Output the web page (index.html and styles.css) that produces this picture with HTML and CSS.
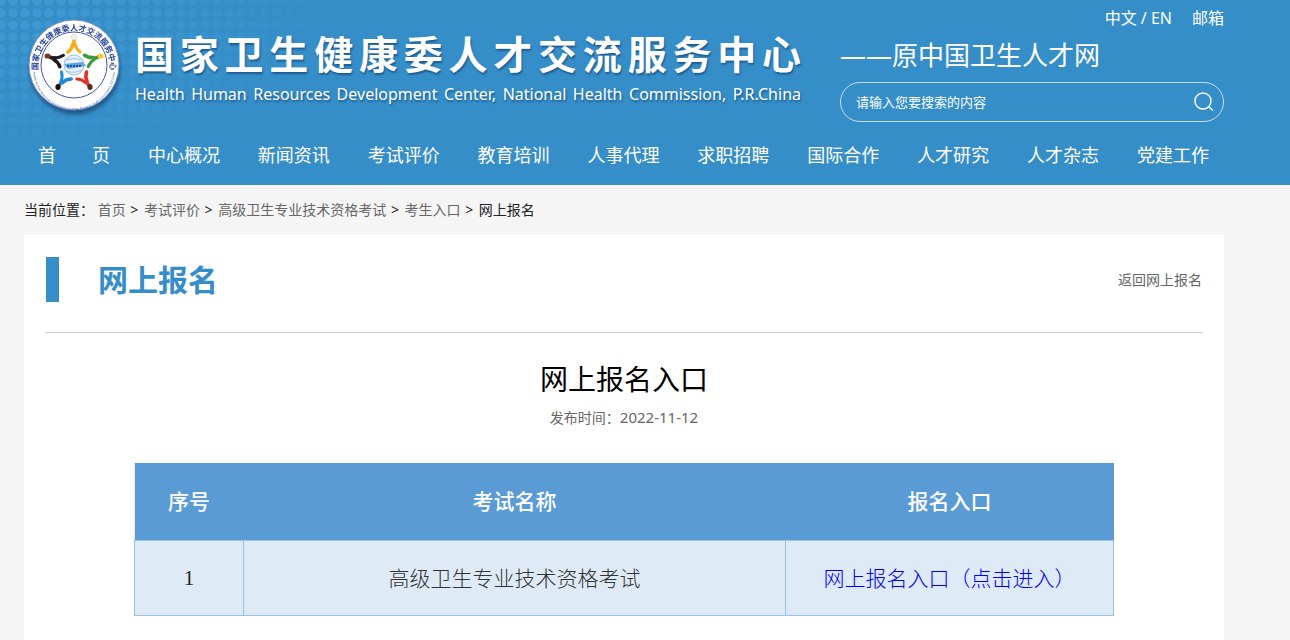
FILE: index.html
```html
<!DOCTYPE html>
<html lang="zh-CN">
<head>
<meta charset="utf-8">
<title>网上报名</title>
<link rel="stylesheet" href="styles.css">
</head>
<body>
<header class="site-header">
  <div class="wrap masthead">
    <a class="logo" href="#" aria-label="首页">
      <svg viewBox="0 0 92 92" width="92" height="92">
        <defs>
          <path id="arc-top" d="M11 56A36 36 0 1 1 81 56"/>
          <path id="arc-bottom" d="M5 50A41 41 0 0 0 87 50"/>
          <g id="figure" fill="none" stroke-linecap="round">
            <path stroke-width="3.600" d="M46 21V25M45 25Q44 30 40 33"/>
            <path stroke-width="3" d="M47 25Q48 30 52 33"/>
          </g>
        </defs>
        <circle cx="46" cy="46" r="45" fill="#fff" stroke="#7d8dc6"/>
        <circle cx="46" cy="46" r="33" fill="#fff" stroke="#4256a5" stroke-width="1"/>
        <text class="ring-cn"><textPath href="#arc-top" startOffset="50%" text-anchor="middle">国家卫生健康委人才交流服务中心</textPath></text>
        <text class="ring-en"><textPath href="#arc-bottom" startOffset="50%" text-anchor="middle">Health Human Resources Development Center, National Health Commission, P.R.China</textPath></text>
        <g stroke="#f6ac19"><use href="#figure"/></g>
        <g stroke="#3d9b3b" transform="rotate(72 46 46)"><use href="#figure"/></g>
        <g stroke="#e4312b" transform="rotate(144 46 46)"><use href="#figure"/></g>
        <g stroke="#2488d8" transform="rotate(216 46 46)"><use href="#figure"/></g>
        <g stroke="#1c1b20" transform="rotate(288 46 46)"><use href="#figure"/></g>
        <ellipse cx="46" cy="18" rx="2.600" ry="3" fill="#f4f1ee" stroke="#d5d0cc" stroke-width=".5"/>
        <ellipse cx="72.500" cy="37" rx="3" ry="2.600" fill="#fbc52b"/>
        <ellipse cx="62" cy="68" rx="2.600" ry="3" fill="#5b2a1c"/>
        <ellipse cx="30" cy="68" rx="2.600" ry="3" fill="#18120f"/>
        <ellipse cx="19.500" cy="37" rx="3" ry="2.600" fill="#7b3a20"/>
        <circle cx="46" cy="46" r="10" fill="#e8f1f9" stroke="#9ebfe0"/>
        <path d="M38 41Q46 38 54 41M38 52Q46 55 54 51" fill="none" stroke="#9cc3e6"/>
        <path d="M36 45L55 43L58 47L40 50Z" fill="#5ea8de"/>
        <path d="M39 47H53" stroke="#1d4f91" stroke-width="2" stroke-dasharray="2 1"/>
      </svg>
    </a>
    <div class="brand">
      <h1 class="brand-cn">国家卫生健康委人才交流服务中心</h1>
      <p class="brand-en">Health Human Resources Development Center, National Health Commission, P.R.China</p>
    </div>
    <div class="tools">
      <div class="quick"><span><a href="#">中文</a> / <a href="#">EN</a></span><a href="#">邮箱</a></div>
      <p class="former">——原中国卫生人才网</p>
      <form class="search">
        <input class="search-input" type="text" aria-label="搜索" placeholder="请输入您要搜索的内容">
        <button class="search-button" type="button" aria-label="搜索">
          <svg viewBox="0 0 20 20" width="20" height="20" fill="none" stroke="#fff" stroke-width="1.400"><circle cx="9" cy="9" r="8"/><path d="M14.500 14.500L19 18.500"/></svg>
        </button>
      </form>
    </div>
  </div>
  <nav class="wrap nav">
    <a href="#">首　　页</a><a href="#">中心概况</a><a href="#">新闻资讯</a><a href="#">考试评价</a><a href="#">教育培训</a><a href="#">人事代理</a><a href="#">求职招聘</a><a href="#">国际合作</a><a href="#">人才研究</a><a href="#">人才杂志</a><a href="#">党建工作</a>
  </nav>
</header>
<main class="wrap">
  <div class="crumbs"><span>当前位置：</span> <a href="#">首页</a> <span class="sep">&gt;</span> <a href="#">考试评价</a> <span class="sep">&gt;</span> <a href="#">高级卫生专业技术资格考试</a> <span class="sep">&gt;</span> <a href="#">考生入口</a> <span class="sep">&gt;</span> <span>网上报名</span></div>
  <section class="panel">
    <div class="panel-head">
      <h2 class="panel-title">网上报名</h2>
      <a class="back" href="#">返回网上报名</a>
    </div>
    <article class="article">
      <h3 class="article-title">网上报名入口</h3>
      <p class="date">发布时间：<time>2022-11-12</time></p>
      <table class="exams">
        <colgroup><col class="col-no"><col class="col-name"><col class="col-entry"></colgroup>
        <thead><tr><th>序号</th><th>考试名称</th><th>报名入口</th></tr></thead>
        <tbody><tr><td class="num">1</td><td>高级卫生专业技术资格考试</td><td><a href="#">网上报名入口（点击进入）</a></td></tr></tbody>
      </table>
    </article>
  </section>
</main>
</body>
</html>
```
FILE: styles.css
```css
* { box-sizing: border-box; }
body, h1, h2, h3, p { margin: 0; }
body {
  background: #f5f5f5;
  color: #333;
  font: 14px/20px "Noto Sans", "Noto Sans CJK SC", sans-serif;
}
a { color: inherit; text-decoration: none; }
.wrap { padding: 0 66px 0 24px; }

.site-header {
  position: relative;
  background: #368ec9;
  color: #fff;
}
.site-header::before {
  content: "";
  position: absolute;
  inset: 0;
  background: radial-gradient(circle, #4aa3d8 4px, transparent 5px) -5px -5px / 12px 12px;
  mask-image: radial-gradient(ellipse 360px 170px at 0 0, rgba(0, 0, 0, 0.6), transparent);
}
.masthead {
  position: relative;
  display: flex;
  height: 126px;
}
.logo { padding: 19px 0 0 4px; width: 111px; flex: none; }
.logo svg { display: block; filter: drop-shadow(1px 4px 2px rgba(10, 50, 90, 0.6)); }
.ring-cn { font: bold 8px "Noto Sans CJK SC", sans-serif; fill: #27439c; }
.ring-en { font: 3px "Noto Sans", sans-serif; fill: #3a5ba8; }
.brand {
  flex: 1;
  padding: 23px 39px 0 0;
  white-space: nowrap;
  text-align-last: justify;
  text-shadow: 1px 2px 2px rgba(10, 60, 110, 0.6);
}
.brand-cn { font: bold 39px/58px "Noto Sans CJK SC", sans-serif; }
.brand-en { font-size: 16px; line-height: 26px; }
.tools { flex: none; width: 32%; padding-top: 8px; }
.quick { display: flex; justify-content: flex-end; gap: 20px; font-size: 16px; line-height: 20px; }
.former { font-size: 26px; line-height: 54px; white-space: nowrap; }
.search {
  display: flex;
  align-items: center;
  height: 40px;
  padding: 0 9px 0 15px;
  border: 1px solid #c3ddef;
  border-radius: 20px;
}
.search-input {
  flex: 1;
  min-width: 0;
  padding: 0;
  border: 0;
  outline: 0;
  background: none;
  color: #fff;
  font: 13px/20px "Noto Sans", "Noto Sans CJK SC", sans-serif;
}
.search-input::placeholder { color: #fff; opacity: 1; }
.search-button { display: flex; padding: 0; border: 0; background: none; }
.nav {
  position: relative;
  display: flex;
  justify-content: space-between;
  padding-left: 38px;
  padding-right: 81px;
  height: 59px;
  font-size: 18px;
  line-height: 58px;
  white-space: nowrap;
}

.crumbs { height: 50px; line-height: 50px; color: #222; white-space: nowrap; }
.crumbs a { color: #666; }
.sep { margin: 0 2px 0 1px; }
.panel { background: #fff; padding: 22px 22px 40px; }
.panel-head {
  display: flex;
  justify-content: space-between;
  align-items: flex-start;
  padding-bottom: 30px;
  border-bottom: 1px solid #ccc;
}
.panel-title {
  padding-left: 39px;
  border-left: 13px solid #368ec9;
  color: #368ec9;
  font-size: 30px;
  line-height: 45px;
}
.back { color: #666; line-height: 45px; }
.article { text-align: center; padding-top: 26px; }
.article-title { color: #000; font-size: 28px; font-weight: 400; line-height: 40px; }
.date { color: #666; line-height: 36px; }
.date time { font-size: 15px; }
.exams {
  width: 980px;
  max-width: 100%;
  margin: 27px auto 0;
  table-layout: fixed;
  border-collapse: collapse;
  background: #deeaf6;
  font-size: 21px;
}
.col-no { width: 109px; }
.col-name { width: 542px; }
.exams th { height: 77px; padding: 0; background: #5b9bd5; color: #fff; font-weight: 500; }
.exams td {
  height: 75px;
  padding: 0;
  border: 1px solid #9cc2e5;
  font-weight: 300;
}
.exams td a { color: #00f; }
.exams .num { color: #222; font-family: "Liberation Serif", serif; font-weight: 400; }
```
